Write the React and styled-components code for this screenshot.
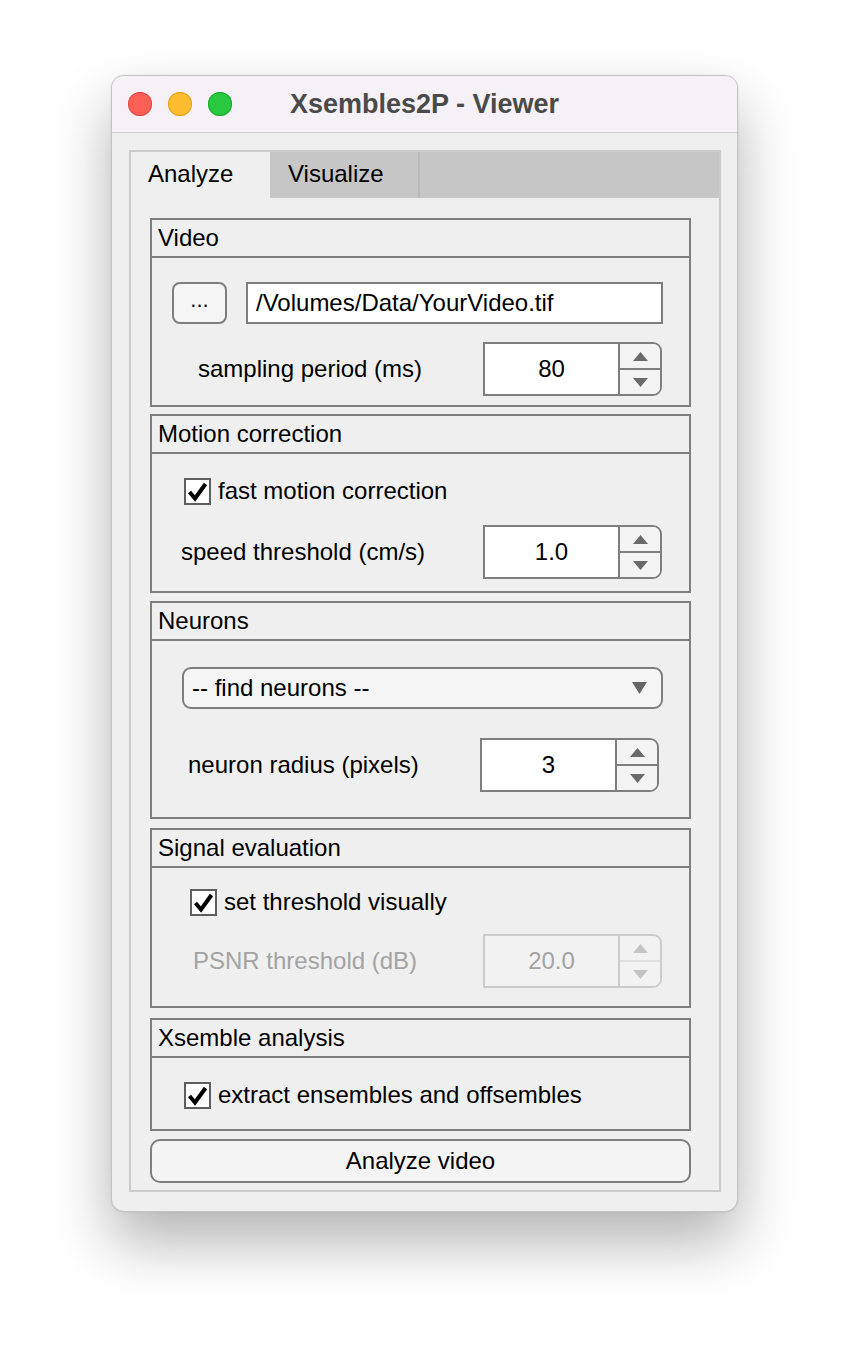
import React from "react";
import styled, { createGlobalStyle } from "styled-components";

const GlobalStyle = createGlobalStyle`
  html, body {
    margin: 0;
    padding: 0;
    background: #ffffff;
  }
  body {
    font-family: "Liberation Sans", Arial, sans-serif;
  }
`;

const Page = styled.div`
  width: 850px;
  height: 1360px;
  padding: 75px 0 0 111px;
  box-sizing: border-box;
`;

const Window = styled.div`
  width: 627px;
  height: 1137px;
  box-sizing: border-box;
  border-radius: 13px;
  background: #efefef;
  border: 1px solid #c4c4c4;
  box-shadow: 0 30px 60px rgba(0, 0, 0, 0.3), 0 0 2px rgba(0, 0, 0, 0.12);
  overflow: hidden;
  display: flex;
  flex-direction: column;
`;

const TitleBar = styled.div`
  height: 56px;
  flex-shrink: 0;
  background: #f5f1f7;
  border-bottom: 1px solid #d2d0d3;
  display: flex;
  align-items: center;
`;

const Lights = styled.div`
  width: 120px;
  box-sizing: border-box;
  display: flex;
  gap: 16px;
  padding-left: 16px;
`;

const Light = styled.span`
  width: 24px;
  height: 24px;
  border-radius: 50%;
  background: ${({ color }) => color};
  box-shadow: inset 0 0 0 1px ${({ edge }) => edge};
`;

const Title = styled.div`
  flex: 1;
  text-align: center;
  margin-right: 120px;
  font-size: 27px;
  font-weight: 700;
  color: #4a4a4a;
`;

const Body = styled.div`
  flex: 1;
  padding: 17px 16px 19px 17px;
  display: flex;
`;

const TabGroup = styled.div`
  flex: 1;
  border: 2px solid #cbcbcb;
  display: flex;
  flex-direction: column;
`;

const TabStrip = styled.div`
  height: 46px;
  background: #c6c6c6;
  display: flex;
  flex-shrink: 0;
`;

const Tab = styled.div`
  width: ${({ w }) => w}px;
  background: ${({ active }) => (active ? "#efefef" : "transparent")};
  border-right: ${({ active }) => (active ? "none" : "2px solid #b9b9b9")};
  font-size: 24px;
  color: #000;
  display: flex;
  align-items: center;
  padding: 0 0 3px ${({ pad }) => pad}px;
  box-sizing: border-box;
`;

const Content = styled.div`
  flex: 1;
  padding: 20px 28px 0 19px;
  display: flex;
  flex-direction: column;
`;

const Panel = styled.div`
  height: ${({ h }) => h}px;
  margin-top: ${({ mt }) => mt || 0}px;
  box-sizing: border-box;
  border: 2px solid #7e7e7e;
  display: flex;
  flex-direction: column;
  flex-shrink: 0;
`;

const PanelHeader = styled.div`
  height: 36px;
  border-bottom: 2px solid #7e7e7e;
  font-size: 24px;
  color: #000;
  display: flex;
  align-items: center;
  padding-left: 6px;
  flex-shrink: 0;
`;

const PanelBody = styled.div`
  display: flex;
  flex-direction: column;
  padding-top: ${({ top }) => top}px;
  gap: ${({ gap }) => gap || 0}px;
`;

const Row = styled.div`
  display: flex;
  align-items: center;
  padding-left: ${({ indent }) => indent}px;
  padding-right: ${({ right }) => right || 0}px;
`;

const Label = styled.span`
  font-size: 24px;
  color: ${({ disabled }) => (disabled ? "#a3a3a3" : "#000")};
  flex: 1;
`;

const SmallButton = styled.div`
  width: 55px;
  height: 42px;
  box-sizing: border-box;
  border: 2px solid #7e7e7e;
  border-radius: 8px;
  background: #f5f5f5;
  font-size: 22px;
  display: flex;
  align-items: center;
  justify-content: center;
  padding-bottom: 6px;
`;

const TextField = styled.div`
  width: 417px;
  height: 42px;
  margin-left: 19px;
  box-sizing: border-box;
  border: 2px solid #7e7e7e;
  background: #fff;
  font-size: 24px;
  display: flex;
  align-items: center;
  padding-left: 8px;
`;

const Spinner = styled.div`
  width: 179px;
  height: 54px;
  box-sizing: border-box;
  border: 2px solid ${({ disabled }) => (disabled ? "#cbcbcb" : "#7e7e7e")};
  border-radius: 0 9px 9px 0;
  display: flex;
  overflow: hidden;
  flex-shrink: 0;
`;

const SpinValue = styled.div`
  width: 133px;
  background: ${({ disabled }) => (disabled ? "#f2f2f2" : "#fff")};
  border-right: 2px solid ${({ disabled }) => (disabled ? "#cbcbcb" : "#7e7e7e")};
  font-size: 24px;
  color: ${({ disabled }) => (disabled ? "#a3a3a3" : "#000")};
  display: flex;
  align-items: center;
  justify-content: center;
`;

const SpinButtons = styled.div`
  flex: 1;
  display: flex;
  flex-direction: column;
  background: ${({ disabled }) => (disabled ? "#f2f2f2" : "#f3f3f3")};
`;

const SpinHalf = styled.div`
  flex: 1;
  display: flex;
  align-items: center;
  justify-content: center;
  border-top: ${({ lower, disabled }) =>
    lower ? `2px solid ${disabled ? "#e0e0e0" : "#7e7e7e"}` : "none"};
`;

const Dropdown = styled.div`
  width: 481px;
  height: 42px;
  margin-left: 30px;
  box-sizing: border-box;
  border: 2px solid #7e7e7e;
  border-radius: 9px;
  background: #f5f5f5;
  font-size: 24px;
  display: flex;
  align-items: center;
  justify-content: space-between;
  padding: 0 14px 0 8px;
`;

const CheckBox = styled.span`
  width: 27px;
  height: 27px;
  box-sizing: border-box;
  border: 2px solid #5e5e5e;
  background: #fff;
  display: inline-flex;
  align-items: center;
  justify-content: center;
  margin-right: 7px;
  flex-shrink: 0;
`;

const BigButton = styled.div`
  width: 541px;
  height: 44px;
  margin-top: ${({ mt }) => mt || 0}px;
  box-sizing: border-box;
  border: 2px solid #7e7e7e;
  border-radius: 10px;
  background: #f4f4f4;
  font-size: 24px;
  display: flex;
  align-items: center;
  justify-content: center;
  flex-shrink: 0;
`;

const Triangle = ({ up, color = "#6a6a6a", w = 15, h = 9 }) => (
  <svg width={w} height={h} viewBox={`0 0 ${w} ${h}`}>
    <polygon
      points={up ? `0,${h} ${w / 2},0 ${w},${h}` : `0,0 ${w},0 ${w / 2},${h}`}
      fill={color}
    />
  </svg>
);

const Check = () => (
  <svg width="21" height="21" viewBox="0 0 21 21">
    <path
      d="M2.5 11 L8 17.5 L18.5 3"
      fill="none"
      stroke="#000"
      strokeWidth="4"
      strokeLinejoin="miter"
    />
  </svg>
);

const NumberSpinner = ({ value, disabled }) => {
  const arrow = disabled ? "#c4c4c4" : "#6a6a6a";
  return (
    <Spinner disabled={disabled}>
      <SpinValue disabled={disabled}>{value}</SpinValue>
      <SpinButtons disabled={disabled}>
        <SpinHalf>
          <Triangle up color={arrow} />
        </SpinHalf>
        <SpinHalf lower disabled={disabled}>
          <Triangle color={arrow} />
        </SpinHalf>
      </SpinButtons>
    </Spinner>
  );
};

const CheckRow = ({ indent, children }) => (
  <Row indent={indent}>
    <CheckBox>
      <Check />
    </CheckBox>
    <Label>{children}</Label>
  </Row>
);

const App = () => (
  <>
    <GlobalStyle />
    <Page>
      <Window>
        <TitleBar>
          <Lights>
            <Light color="#fe5f57" edge="#e2463f" />
            <Light color="#febc2e" edge="#e1a116" />
            <Light color="#28c840" edge="#1aab29" />
          </Lights>
          <Title>Xsembles2P - Viewer</Title>
        </TitleBar>
        <Body>
          <TabGroup>
            <TabStrip>
              <Tab active w={139} pad={17}>
                Analyze
              </Tab>
              <Tab w={150} pad={18}>
                Visualize
              </Tab>
            </TabStrip>
            <Content>
              <Panel h={189}>
                <PanelHeader>Video</PanelHeader>
                <PanelBody top={24} gap={18}>
                  <Row indent={20}>
                    <SmallButton>...</SmallButton>
                    <TextField>/Volumes/Data/YourVideo.tif</TextField>
                  </Row>
                  <Row indent={46} right={27}>
                    <Label>sampling period (ms)</Label>
                    <NumberSpinner value="80" />
                  </Row>
                </PanelBody>
              </Panel>

              <Panel h={179} mt={7}>
                <PanelHeader>Motion correction</PanelHeader>
                <PanelBody top={23} gap={20}>
                  <CheckRow indent={32}>fast motion correction</CheckRow>
                  <Row indent={29} right={27}>
                    <Label>speed threshold (cm/s)</Label>
                    <NumberSpinner value="1.0" />
                  </Row>
                </PanelBody>
              </Panel>

              <Panel h={218} mt={8}>
                <PanelHeader>Neurons</PanelHeader>
                <PanelBody top={26} gap={29}>
                  <Row indent={0}>
                    <Dropdown>
                      <span>-- find neurons --</span>
                      <Triangle color="#666" w={15} h={12} />
                    </Dropdown>
                  </Row>
                  <Row indent={36} right={30}>
                    <Label>neuron radius (pixels)</Label>
                    <NumberSpinner value="3" />
                  </Row>
                </PanelBody>
              </Panel>

              <Panel h={180} mt={9}>
                <PanelHeader>Signal evaluation</PanelHeader>
                <PanelBody top={20} gap={18}>
                  <CheckRow indent={38}>set threshold visually</CheckRow>
                  <Row indent={41} right={27}>
                    <Label disabled>PSNR threshold (dB)</Label>
                    <NumberSpinner value="20.0" disabled />
                  </Row>
                </PanelBody>
              </Panel>

              <Panel h={113} mt={10}>
                <PanelHeader>Xsemble analysis</PanelHeader>
                <PanelBody top={23}>
                  <CheckRow indent={32}>extract ensembles and offsembles</CheckRow>
                </PanelBody>
              </Panel>

              <BigButton mt={8}>Analyze video</BigButton>
            </Content>
          </TabGroup>
        </Body>
      </Window>
    </Page>
  </>
);

export default App;
